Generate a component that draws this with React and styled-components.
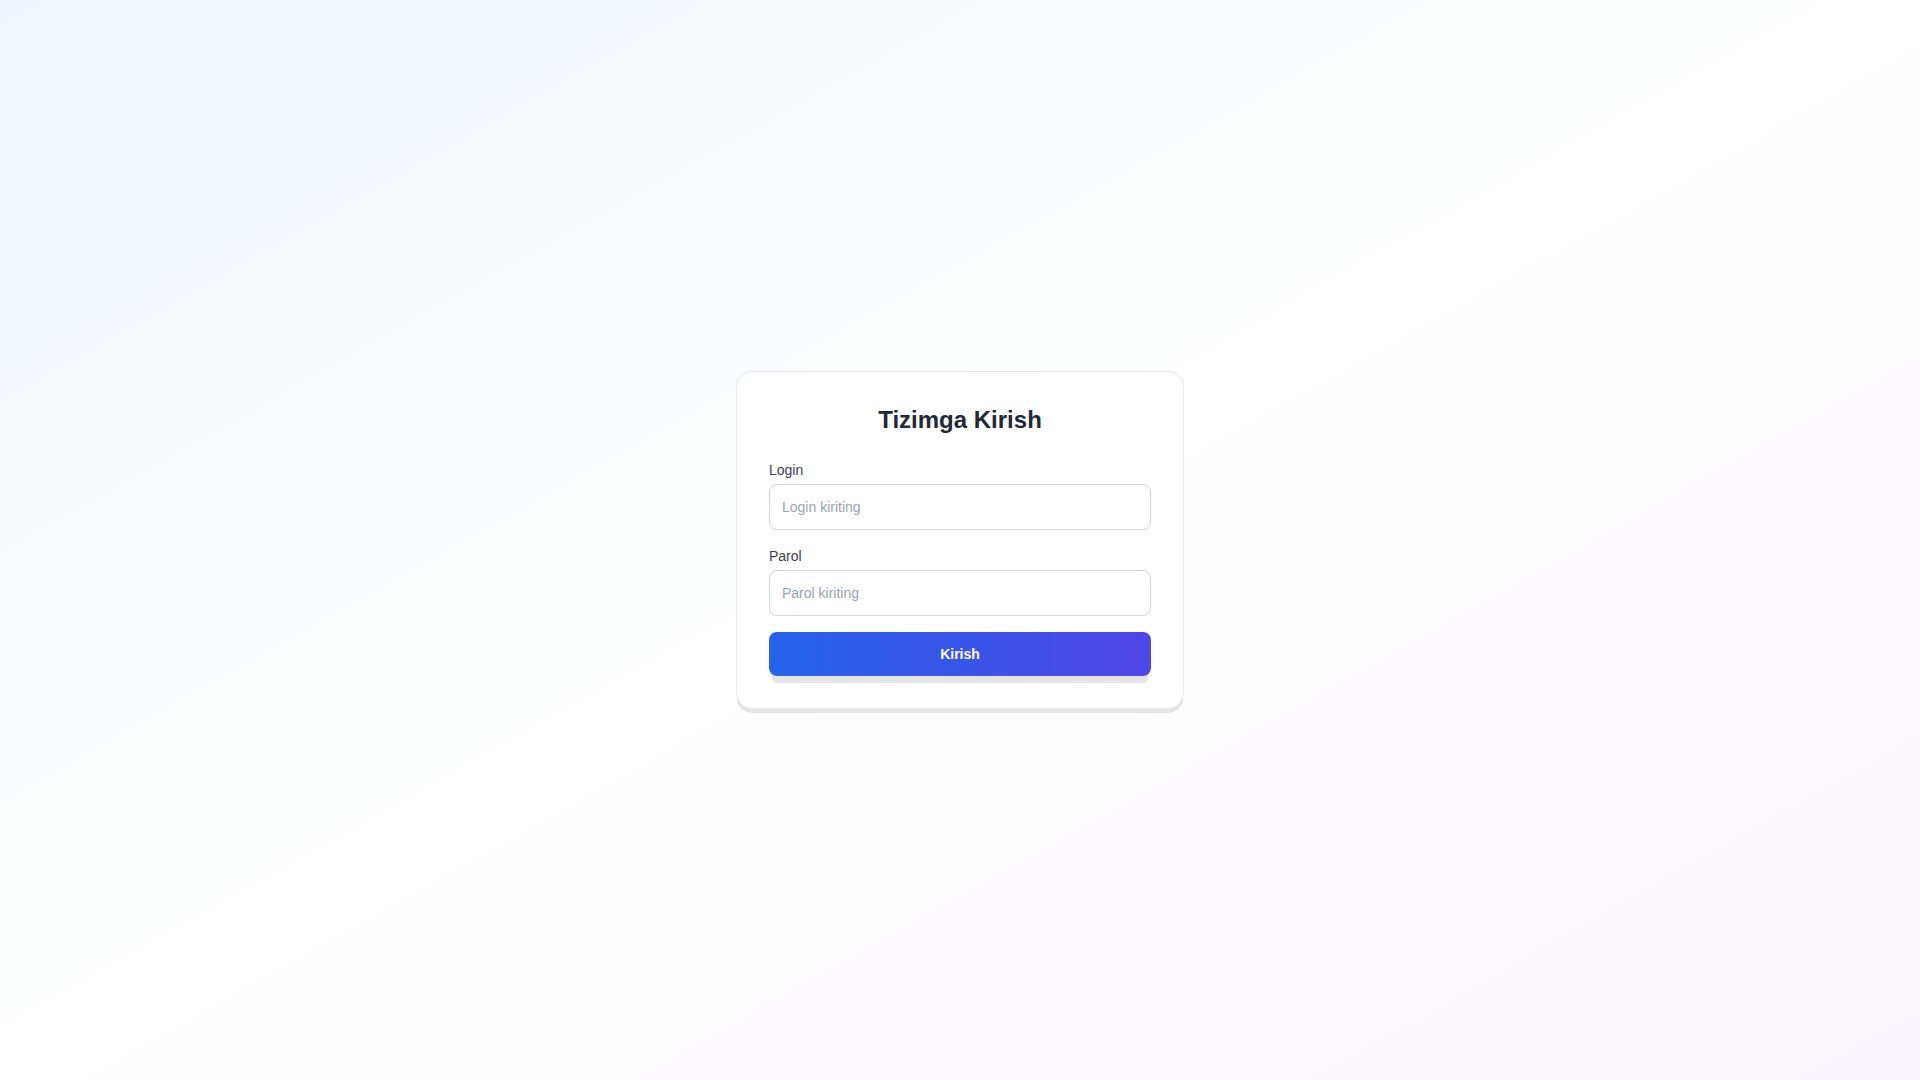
import React from 'react'
import styled, { createGlobalStyle } from 'styled-components'

const GlobalStyle = createGlobalStyle`
  *{
    box-sizing: border-box;
  }
  html, body{
    margin: 0;
    padding: 0;
  }
  body{
    font-family: "Liberation Sans", Arial, Helvetica, sans-serif;
  }
`

const Page = styled.div`
  min-height: 100vh;
  display: flex;
  align-items: center;
  justify-content: center;
  background: linear-gradient(to bottom right, #eff6ff, #ffffff, #faf5ff);
`

const Card = styled.form`
  width: 448px;
  padding: 32px;
  background: #ffffff;
  border: 1px solid #e5e7eb;
  border-radius: 16px;
  box-shadow: 0 5px 0 -1px #e4e4e7;
  display: flex;
  flex-direction: column;
  h1{
    margin: 0 0 24px;
    text-align: center;
    font-size: 24px;
    line-height: 32px;
    font-weight: 700;
    color: #1f2937;
  }
`

const Field = styled.div`
  display: flex;
  flex-direction: column;
  gap: 4px;
  margin-bottom: 16px;
  label{
    font-size: 14px;
    line-height: 20px;
    font-weight: 400;
    color: #374151;
  }
`

const Input = styled.input`
  width: 100%;
  height: 46px;
  padding: 12px;
  border: 1px solid #d1d5db;
  border-radius: 8px;
  font-family: inherit;
  font-size: 14px;
  color: #1f2937;
  outline: none;
  &::placeholder{
    color: #9ca3af;
  }
`

const Button = styled.button`
  height: 44px;
  border: none;
  border-radius: 8px;
  background: linear-gradient(to right, #2563eb, #4f46e5);
  color: #ffffff;
  font-family: inherit;
  font-size: 14px;
  font-weight: 700;
  cursor: pointer;
  box-shadow: 0 10px 0 -3px #e5e5e5;
`

const App = () => {
  return (
    <>
      <GlobalStyle />
      <Page>
        <Card onSubmit={e => e.preventDefault()}>
          <h1>Tizimga Kirish</h1>
          <Field>
            <label htmlFor="login">Login</label>
            <Input id="login" type="text" placeholder="Login kiriting" />
          </Field>
          <Field>
            <label htmlFor="parol">Parol</label>
            <Input id="parol" type="password" placeholder="Parol kiriting" />
          </Field>
          <Button type="submit">Kirish</Button>
        </Card>
      </Page>
    </>
  )
}

export default App
